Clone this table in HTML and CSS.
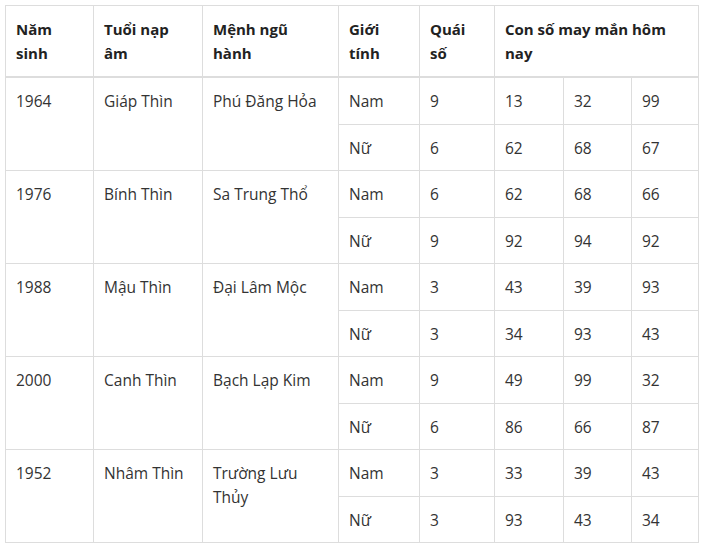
FILE: index.html
```html
<!DOCTYPE html>
<html lang="vi">
<head>
<meta charset="utf-8">
<link rel="stylesheet" href="styles.css">
</head>
<body>
<table class="lucky">
  <colgroup>
    <col class="c1"><col class="c2"><col class="c3"><col class="c4"><col class="c5"><col class="c6"><col class="c7"><col class="c8">
  </colgroup>
  <thead>
    <tr>
      <th>Năm sinh</th>
      <th>Tuổi nạp âm</th>
      <th>Mệnh ngũ hành</th>
      <th>Giới tính</th>
      <th>Quái số</th>
      <th colspan="3">Con số may mắn hôm nay</th>
    </tr>
  </thead>
  <tbody>
    <tr><td rowspan="2">1964</td><td rowspan="2">Giáp Thìn</td><td rowspan="2">Phú Đăng Hỏa</td><td>Nam</td><td>9</td><td>13</td><td>32</td><td>99</td></tr>
    <tr><td>Nữ</td><td>6</td><td>62</td><td>68</td><td>67</td></tr>
    <tr><td rowspan="2">1976</td><td rowspan="2">Bính Thìn</td><td rowspan="2">Sa Trung Thổ</td><td>Nam</td><td>6</td><td>62</td><td>68</td><td>66</td></tr>
    <tr><td>Nữ</td><td>9</td><td>92</td><td>94</td><td>92</td></tr>
    <tr><td rowspan="2">1988</td><td rowspan="2">Mậu Thìn</td><td rowspan="2">Đại Lâm Mộc</td><td>Nam</td><td>3</td><td>43</td><td>39</td><td>93</td></tr>
    <tr><td>Nữ</td><td>3</td><td>34</td><td>93</td><td>43</td></tr>
    <tr><td rowspan="2">2000</td><td rowspan="2">Canh Thìn</td><td rowspan="2">Bạch Lạp Kim</td><td>Nam</td><td>9</td><td>49</td><td>99</td><td>32</td></tr>
    <tr><td>Nữ</td><td>6</td><td>86</td><td>66</td><td>87</td></tr>
    <tr><td rowspan="2">1952</td><td rowspan="2">Nhâm Thìn</td><td rowspan="2">Trường Lưu Thủy</td><td>Nam</td><td>3</td><td>33</td><td>39</td><td>43</td></tr>
    <tr><td>Nữ</td><td>3</td><td>93</td><td>43</td><td>34</td></tr>
  </tbody>
</table>
</body>
</html>
```
FILE: styles.css
```css
html, body {
  margin: 0;
  padding: 0;
  background: #ffffff;
}
body {
  padding: 5px;
  font-family: "Open Sans", "DejaVu Sans", sans-serif;
  font-size: 15px;
  color: #333333;
}
.lucky {
  border-collapse: collapse;
  table-layout: fixed;
  width: 693px;
}
.c1 { width: 88px; }
.c2 { width: 109px; }
.c3 { width: 136px; }
.c4 { width: 81px; }
.c5 { width: 75px; }
.c6 { width: 69px; }
.c7 { width: 68px; }
.c8 { width: 67px; }
.lucky th,
.lucky td {
  border: 1px solid #dddddd;
  text-align: left;
  vertical-align: top;
  line-height: 24px;
  padding: 11px 10px 10.5px 10px;
}
.lucky td {
  font-size: 15.5px;
}
.lucky th {
  font-weight: 700;
  color: #222222;
  padding: 11px 10px 11px 10px;
  border-bottom: 2px solid #dddddd;
}
```
